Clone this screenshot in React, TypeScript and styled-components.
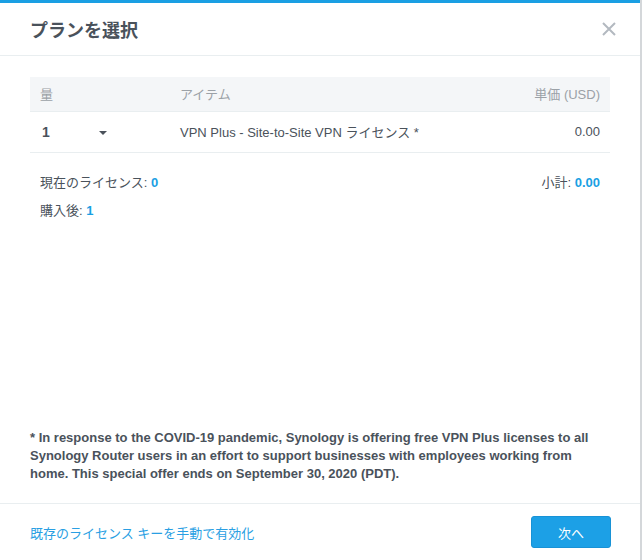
import React from 'react'
import styled, { createGlobalStyle } from 'styled-components'

const GlobalStyle = createGlobalStyle`
  html, body {
    margin: 0;
    padding: 0;
    background: #ffffff;
  }
  * {
    box-sizing: border-box;
  }
`

const FONT = `"Liberation Sans", Arial, "Noto Sans CJK JP", sans-serif`
const BLUE = '#1a9fe3'
const TEXT = '#4a525b'

interface LineItem {
  qty: number
  name: string
  price: string
}

const items: LineItem[] = [
  { qty: 1, name: 'VPN Plus - Site-to-Site VPN ライセンス *', price: '0.00' },
]

const App: React.FC = () => {
  return (
    <>
      <GlobalStyle />
      <Dialog>
        <TopBar />
        <Header>
          <Title>プランを選択</Title>
          <CloseButton aria-label="close">
            <svg width="14" height="14" viewBox="0 0 14 14">
              <path d="M1 1 L13 13 M13 1 L1 13" stroke="#b3b9c0" strokeWidth="2" />
            </svg>
          </CloseButton>
        </Header>
        <Body>
          <Table>
            <thead>
              <HeadRow>
                <HeadCell $width={140}>量</HeadCell>
                <HeadCell>アイテム</HeadCell>
                <HeadCell $align="right">単価 (USD)</HeadCell>
              </HeadRow>
            </thead>
            <tbody>
              {items.map((item, i) => (
                <Row key={i}>
                  <Cell>
                    <QtySelect>
                      <QtyValue>{item.qty}</QtyValue>
                      <Caret />
                    </QtySelect>
                  </Cell>
                  <Cell>{item.name}</Cell>
                  <Cell $align="right">{item.price}</Cell>
                </Row>
              ))}
            </tbody>
          </Table>
          <Summary>
            <SummaryRow>
              <span>
                現在のライセンス: <Value>0</Value>
              </span>
              <span>
                小計: <Value>0.00</Value>
              </span>
            </SummaryRow>
            <SummaryRow>
              <span>
                購入後: <Value>1</Value>
              </span>
            </SummaryRow>
          </Summary>
          <Note>
            * In response to the COVID-19 pandemic, Synology is offering free VPN Plus licenses to all
            Synology Router users in an effort to support businesses with employees working from
            home. This special offer ends on September 30, 2020 (PDT).
          </Note>
        </Body>
        <Footer>
          <FooterLink href="#">既存のライセンス キーを手動で有効化</FooterLink>
          <NextButton>次へ</NextButton>
        </Footer>
      </Dialog>
    </>
  )
}

const Dialog = styled.div`
  width: 642px;
  height: 560px;
  display: flex;
  flex-direction: column;
  background: #ffffff;
  border-right: 2px solid #d4d7da;
  font-family: ${FONT};
  color: ${TEXT};
`

const TopBar = styled.div`
  height: 3px;
  background: ${BLUE};
  flex-shrink: 0;
`

const Header = styled.div`
  height: 53px;
  flex-shrink: 0;
  display: flex;
  align-items: center;
  justify-content: space-between;
  padding: 0 19px 1px 30px;
  border-bottom: 1px solid #e9eef0;
`

const Title = styled.h2`
  margin: 0;
  font-size: 18px;
  font-weight: bold;
  color: #4a525b;
`

const CloseButton = styled.button`
  width: 24px;
  height: 24px;
  padding: 0;
  border: none;
  background: none;
  display: flex;
  align-items: center;
  justify-content: center;
`

const Body = styled.div`
  flex: 1;
  display: flex;
  flex-direction: column;
  padding: 21px 30px 20px 30px;
`

const Table = styled.table`
  width: 100%;
  border-collapse: collapse;
  font-size: 13px;
`

const HeadRow = styled.tr`
  background: #f4f6f8;
  height: 34px;
  border-bottom: 1px solid #e9eef0;
`

const HeadCell = styled.th<{ $width?: number; $align?: string }>`
  width: ${p => (p.$width ? `${p.$width}px` : 'auto')};
  text-align: ${p => p.$align || 'left'};
  font-weight: normal;
  color: #9ba1a7;
  padding: 0 10px;
`

const Row = styled.tr`
  height: 41px;
  border-bottom: 1px solid #e9eef0;
`

const Cell = styled.td<{ $align?: string }>`
  text-align: ${p => p.$align || 'left'};
  padding: 0 10px;
  color: #4a525b;
`

const QtySelect = styled.div`
  display: flex;
  align-items: center;
  width: 67px;
`

const QtyValue = styled.span`
  font-weight: bold;
  font-size: 14px;
  padding-left: 2px;
  flex: 1;
`

const Caret = styled.span`
  width: 0;
  height: 0;
  margin-top: 2px;
  border-left: 4px solid transparent;
  border-right: 4px solid transparent;
  border-top: 4px solid #4a525b;
`

const Summary = styled.div`
  display: flex;
  flex-direction: column;
  gap: 12px;
  padding: 22px 10px 0 10px;
  font-size: 13px;
`

const SummaryRow = styled.div`
  display: flex;
  justify-content: space-between;
  line-height: 16px;
`

const Value = styled.b`
  color: ${BLUE};
`

const Note = styled.p`
  margin: auto 0 0 0;
  font-size: 13px;
  font-weight: bold;
  line-height: 18px;
  color: #4a525b;
`

const Footer = styled.div`
  height: 57px;
  flex-shrink: 0;
  display: flex;
  align-items: center;
  justify-content: space-between;
  padding: 0 29px 0 30px;
  border-top: 1px solid #e9eef0;
`

const FooterLink = styled.a`
  color: #2a9fe3;
  font-size: 13px;
  text-decoration: none;
`

const NextButton = styled.button`
  width: 80px;
  height: 32px;
  border: 1px solid #1892d6;
  border-radius: 3px;
  background: #1ca0e6;
  color: #ffffff;
  font-family: ${FONT};
  font-size: 13px;
`

export default App
